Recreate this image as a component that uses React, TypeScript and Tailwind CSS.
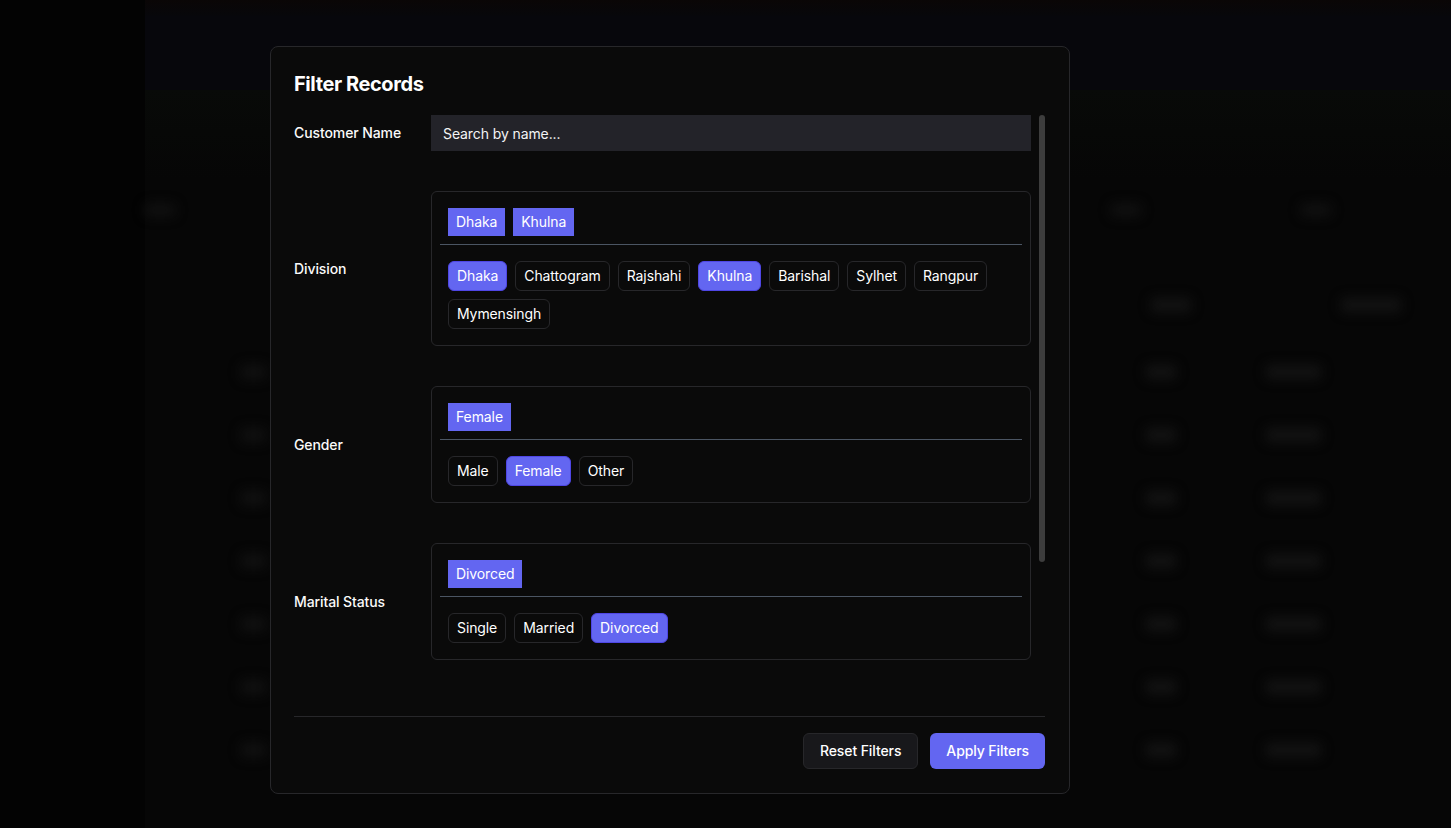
import React from "react";

const divisions = ["Dhaka", "Chattogram", "Rajshahi", "Khulna", "Barishal", "Sylhet", "Rangpur", "Mymensingh"];
const genders = ["Male", "Female", "Other"];
const marital = ["Single", "Married", "Divorced"];

function FilterBox({ selected, options }: { selected: string[]; options: string[] }) {
  return (
    <div className="flex-1 rounded-md border border-[#27272a] p-2">
      <div className="flex flex-wrap gap-2 p-2">
        {selected.map((s) => (
          <span key={s} className="bg-[#6366f1] px-2 py-1 text-sm leading-5 text-white">
            {s}
          </span>
        ))}
      </div>
      <div className="h-px bg-[#4b5563]" />
      <div className="mt-2 flex flex-wrap gap-2 p-2">
        {options.map((o) => {
          const on = selected.includes(o);
          return (
            <span
              key={o}
              className={
                on
                  ? "rounded-md border border-[#4f46e5] bg-[#6366f1] px-2 py-1 text-sm leading-5 text-white"
                  : "rounded-md border border-[#27272a] bg-[#0a0a0a] px-2 py-1 text-sm leading-5 text-white"
              }
            >
              {o}
            </span>
          );
        })}
      </div>
    </div>
  );
}

function Row({ label, children }: { label: string; children: React.ReactNode }) {
  return (
    <div className="flex items-center">
      <div className="w-[137px] shrink-0 text-sm font-medium leading-5 text-[#fafafa]">{label}</div>
      {children}
    </div>
  );
}

const bgRows = [0, 1, 2, 3, 4, 5, 6];

export default function App() {
  return (
    <div className="relative h-[828px] w-full overflow-hidden bg-[#040404] font-['Inter',sans-serif]">
      {/* Background dashboard (blurred, dimmed) */}
      <div className="flex h-[828px] w-full">
        <div className="w-[145px] shrink-0 bg-[#030303]" />
        <div className="flex flex-1 flex-col bg-[#060606]">
          <div className="h-[16px] bg-linear-to-b from-[#0a0606] to-[#07070b]" />
          <div className="h-[74px] bg-[#07070c]" />
          <div className="h-[90px] bg-linear-to-b from-[#080a08] to-[#060606]" />
          <div className="flex h-[60px] items-center justify-between blur-[6px]">
            <div className="h-[12px] w-[30px] rounded bg-[#111111]" />
            <div className="flex gap-[160px] pr-[120px]">
              <div className="h-[12px] w-[30px] rounded bg-[#111111]" />
              <div className="h-[12px] w-[30px] rounded bg-[#111111]" />
            </div>
          </div>
          <div className="mt-[32px] flex h-[65px] items-center justify-end gap-[150px] pr-[50px] blur-[6px]">
            <div className="h-[14px] w-[40px] rounded bg-[#131313]" />
            <div className="h-[14px] w-[60px] rounded bg-[#131313]" />
          </div>
          <div className="mt-[3px] flex flex-col">
            {bgRows.map((r) => (
              <div key={r} className="flex h-[63px] items-center blur-[6px]">
                <div className="ml-[96px] h-[14px] w-[25px] rounded bg-[#111111]" />
                <div className="ml-[880px] h-[14px] w-[30px] rounded bg-[#131313]" />
                <div className="ml-[90px] h-[14px] w-[55px] rounded bg-[#131313]" />
              </div>
            ))}
          </div>
        </div>
      </div>

      {/* Overlay + modal */}
      <div className="absolute inset-0 pl-[270px] pt-[46px]">
        <div className="flex h-[748px] w-[800px] flex-col rounded-lg border border-[#27272a] bg-[#0a0a0a] pb-6 pl-[23px] pr-6 pt-[23px] tracking-[-0.1px] text-white">
          <h2 className="text-xl font-bold leading-7 tracking-[-0.4px] text-white">Filter Records</h2>
          <div className="mt-[17px] flex h-[586px] gap-2">
            <div className="flex flex-1 flex-col gap-10 overflow-hidden">
              <Row label="Customer Name">
                <input
                  readOnly
                  placeholder="Search by name..."
                  className="h-9 flex-1 bg-[#232329] px-3 text-sm tracking-[-0.1px] text-white outline-none placeholder:text-[#f4f4f5]"
                />
              </Row>
              <Row label="Division">
                <FilterBox selected={["Dhaka", "Khulna"]} options={divisions} />
              </Row>
              <Row label="Gender">
                <FilterBox selected={["Female"]} options={genders} />
              </Row>
              <Row label="Marital Status">
                <FilterBox selected={["Divorced"]} options={marital} />
              </Row>
            </div>
            <div className="w-[6px] shrink-0">
              <div className="h-[447px] w-[6px] rounded-full bg-[#3d3d3d]" />
            </div>
          </div>
          <div className="mt-4 flex justify-end gap-3 border-t border-[#27272a] pt-4">
            <button className="h-9 rounded-md border border-[#27272a] bg-[#18181b] px-4 text-sm font-medium tracking-[-0.1px] text-white">
              Reset Filters
            </button>
            <button className="h-9 rounded-md bg-[#6366f1] px-4 text-sm font-medium tracking-[-0.1px] text-white">
              Apply Filters
            </button>
          </div>
        </div>
      </div>
    </div>
  );
}
